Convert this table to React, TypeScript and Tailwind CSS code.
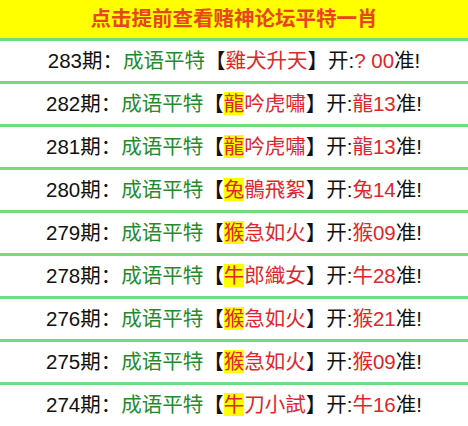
const ROWS = [
  { issue: '283', idiom: '雞犬升天', hl: false, result: '? 00' },
  { issue: '282', idiom: '龍吟虎嘯', hl: true, result: '龍13' },
  { issue: '281', idiom: '龍吟虎嘯', hl: true, result: '龍13' },
  { issue: '280', idiom: '兔鶻飛絮', hl: true, result: '兔14' },
  { issue: '279', idiom: '猴急如火', hl: true, result: '猴09' },
  { issue: '278', idiom: '牛郎織女', hl: true, result: '牛28' },
  { issue: '276', idiom: '猴急如火', hl: true, result: '猴21' },
  { issue: '275', idiom: '猴急如火', hl: true, result: '猴09' },
  { issue: '274', idiom: '牛刀小試', hl: true, result: '牛16' },
];

export default function App() {
  return (
    <div
      className="w-[468px] h-[426px] overflow-hidden bg-white"
      style={{ fontFamily: '"Liberation Sans", "Noto Sans CJK SC", sans-serif' }}
    >
      <div className="flex h-[38px] items-center justify-center bg-[#ffff00] text-[20.5px] font-bold text-[#e8451c]">
        点击提前查看赌神论坛平特一肖
      </div>
      {ROWS.map((row) => (
        <div
          key={row.issue}
          className="flex h-[43px] items-center justify-center border-t-[3px] border-[#74dc80] text-[20.5px] text-[#111]"
        >
          <span>{row.issue}期：</span>
          <span className="text-[#238b2c]">成语平特</span>
          <span>【</span>
          <span className="text-[#e0262c]">
            {row.hl ? (
              <>
                <span className="bg-[#ffff00]">{row.idiom[0]}</span>
                {row.idiom.slice(1)}
              </>
            ) : (
              row.idiom
            )}
          </span>
          <span>】开:</span>
          <span className="text-[#e0262c] whitespace-pre">{row.result}</span>
          <span>准!</span>
        </div>
      ))}
    </div>
  );
}
